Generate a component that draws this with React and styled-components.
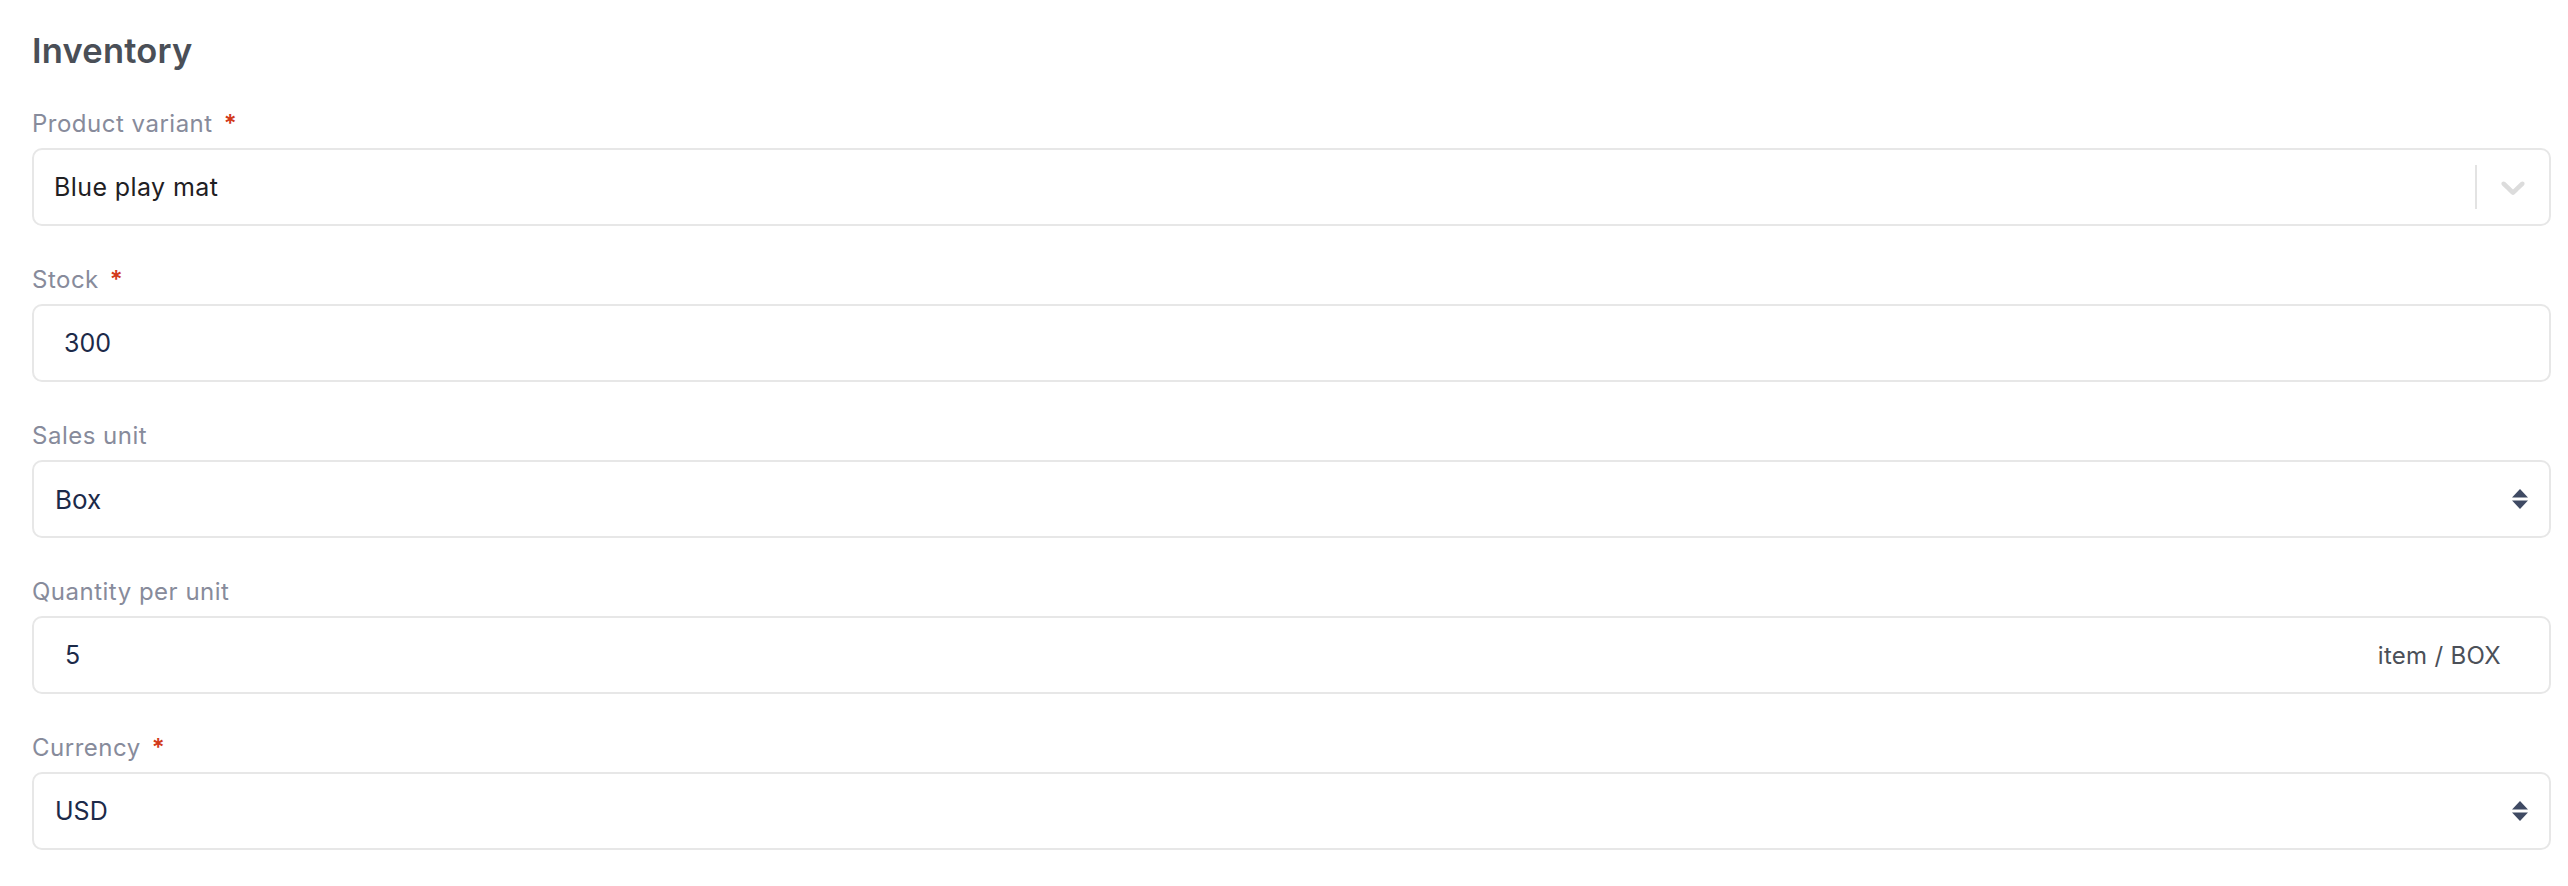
import React from "react";
import styled, { createGlobalStyle } from "styled-components";

/* ================= GLOBAL ================= */

const GlobalStyle = createGlobalStyle`
  * { box-sizing: border-box; }
  body {
    margin: 0;
    background: #ffffff;
    font-family: Inter, "Noto Sans", sans-serif;
  }
`;

/* ================= LAYOUT ================= */

const Page = styled.div`
  padding: 26px 17px 30px 32px;
`;

const Title = styled.h2`
  margin: 0 0 33px;
  font-size: 34.5px;
  font-weight: 600;
  line-height: 50px;
  color: #4a4f57;
  letter-spacing: 0.2px;
`;

const Form = styled.div`
  display: flex;
  flex-direction: column;
  gap: 39px;
`;

/* ================= FIELD ================= */

const Field = styled.div`
  display: flex;
  flex-direction: column;
  gap: 9px;
`;

const Label = styled.label`
  display: flex;
  align-items: center;
  gap: 11px;
  font-size: 24px;
  line-height: 30px;
  color: #878b9b;
  letter-spacing: 0.5px;
`;

const Required = styled.span`
  color: #d23a1b;
  font-weight: 600;
`;

const Box = styled.div`
  display: flex;
  align-items: center;
  height: 78px;
  border: 2px solid #e7e7e7;
  border-radius: 10px;
  background: #fff;
  padding-left: ${(p) => p.$pad ?? 20}px;
  padding-right: ${(p) => p.$padRight ?? 20}px;
`;

const Value = styled.span`
  flex: 1;
  font-size: ${(p) => p.$size || 25}px;
  color: ${(p) => p.$color || "#1c2a49"};
  letter-spacing: ${(p) => p.$spacing || 0}px;
`;

const Addon = styled.span`
  font-size: 24px;
  color: #4b5058;
  letter-spacing: 0.3px;
  margin-right: 28px;
`;

/* ================= REACT-SELECT LIKE INDICATORS ================= */

const Indicators = styled.div`
  display: flex;
  align-items: center;
  height: 100%;
`;

const Separator = styled.span`
  width: 2px;
  height: 44px;
  background: #e3e3e3;
`;

const Chevron = styled.span`
  display: flex;
  align-items: center;
  justify-content: center;
  width: 72px;
  color: #dcdcdc;
`;

const SortIcon = styled.span`
  display: flex;
  margin-right: 1px;
  color: #3f4a63;
`;

function ChevronDown() {
  return (
    <svg width="40" height="40" viewBox="0 0 20 20" fill="currentColor">
      <path d="M4.516 7.548c0.436-0.446 1.043-0.481 1.576 0l3.908 3.747 3.908-3.747c0.533-0.481 1.141-0.446 1.574 0 0.436 0.445 0.408 1.197 0 1.615-0.406 0.418-4.695 4.502-4.695 4.502-0.217 0.223-0.502 0.335-0.787 0.335s-0.57-0.112-0.789-0.335c0 0-4.287-4.084-4.695-4.502s-0.436-1.17 0-1.615z" />
    </svg>
  );
}

function UpDown() {
  return (
    <svg width="16" height="20" viewBox="0 0 16 20" fill="currentColor">
      <path d="M8 0 L16 8.5 L0 8.5 Z" />
      <path d="M0 11.5 L16 11.5 L8 20 Z" />
    </svg>
  );
}

/* ================= COMPONENT ================= */

export default function App() {
  return (
    <>
      <GlobalStyle />
      <Page>
        <Title>Inventory</Title>

        <Form>
          <Field>
            <Label>
              Product variant <Required>*</Required>
            </Label>
            <Box $pad={20} $padRight={0}>
              <Value $size={25} $spacing={0.4} $color="#1f2023">
                Blue play mat
              </Value>
              <Indicators>
                <Separator />
                <Chevron>
                  <ChevronDown />
                </Chevron>
              </Indicators>
            </Box>
          </Field>

          <Field>
            <Label>
              Stock <Required>*</Required>
            </Label>
            <Box $pad={30}>
              <Value>300</Value>
            </Box>
          </Field>

          <Field>
            <Label>Sales unit</Label>
            <Box $pad={21} $padRight={20}>
              <Value $size={26}>Box</Value>
              <SortIcon>
                <UpDown />
              </SortIcon>
            </Box>
          </Field>

          <Field>
            <Label>Quantity per unit</Label>
            <Box $pad={31} $padRight={20}>
              <Value>5</Value>
              <Addon>item / BOX</Addon>
            </Box>
          </Field>

          <Field>
            <Label>
              Currency <Required>*</Required>
            </Label>
            <Box $pad={21} $padRight={20}>
              <Value>USD</Value>
              <SortIcon>
                <UpDown />
              </SortIcon>
            </Box>
          </Field>
        </Form>
      </Page>
    </>
  );
}
